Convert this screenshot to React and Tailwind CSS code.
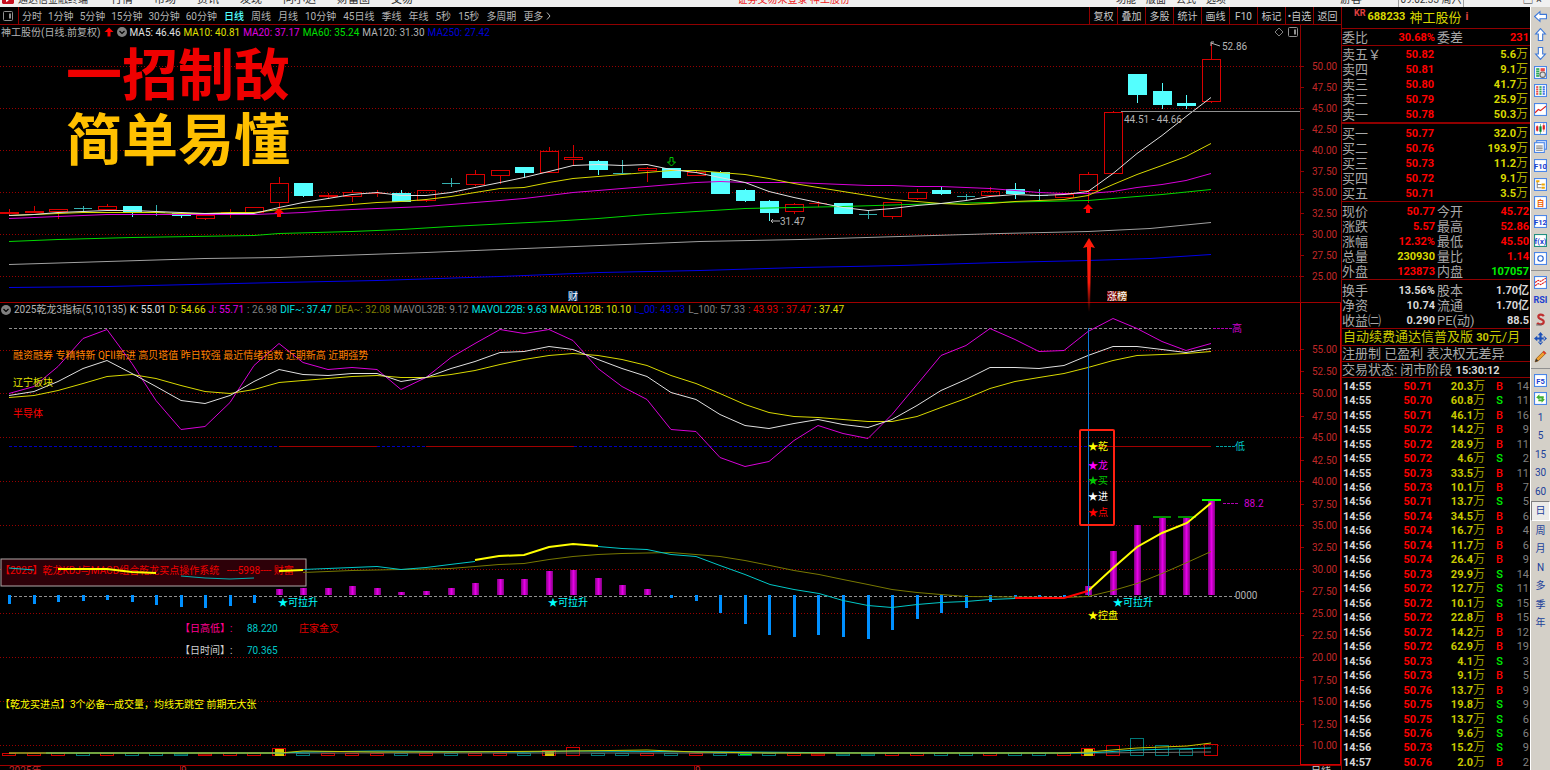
import React from "react";

const STEP = 24.53;
const xAt = (i) => Math.round(9 + i * STEP);

// kind, high, low, body top, body bottom
const candles = [
  ["r", 209, 215, 212, 214], ["r", 206, 213, 211, 213], ["r", 209, 219, 209, 212],
  ["x", 206, 211, 208, 208], ["r", 204, 210, 206, 210], ["c", 206, 217, 206, 212],
  ["x", 205, 216, 212, 212], ["c", 212, 218, 213, 216], ["r", 215, 220, 215, 219],
  ["y", 209, 218, 212, 212], ["r", 207, 213, 207, 213], ["r", 177, 207, 183, 203],
  ["c", 183, 197, 183, 196], ["r", 193, 199, 195, 197], ["r", 190, 202, 192, 197],
  ["y", 190, 197, 193, 193], ["c", 190, 202, 193, 202], ["r", 190, 202, 190, 201],
  ["x", 178, 187, 183, 183], ["r", 170, 186, 174, 185], ["r", 170, 184, 170, 176],
  ["c", 167, 178, 167, 173], ["r", 147, 173, 151, 173], ["r", 145, 165, 157, 160],
  ["c", 160, 175, 161, 170], ["x", 160, 174, 173, 173], ["r", 167, 182, 168, 171],
  ["c", 168, 178, 168, 178], ["r", 170, 176, 172, 176], ["c", 171, 194, 172, 194],
  ["c", 189, 202, 190, 201], ["c", 200, 221, 201, 213], ["r", 203, 214, 204, 212],
  ["y", 201, 207, 203, 203], ["c", 203, 214, 203, 214], ["x", 210, 219, 214, 214],
  ["r", 202, 219, 202, 217], ["r", 189, 200, 192, 199], ["c", 186, 195, 190, 194],
  ["x", 194, 200, 196, 196], ["r", 187, 196, 191, 196], ["c", 183, 199, 189, 194],
  ["x", 189, 200, 195, 195], ["r", 194, 198, 194, 198], ["r", 172, 203, 174, 191],
  ["r", 111, 174, 112, 174], ["c", 74, 103, 74, 95], ["c", 83, 109, 91, 105],
  ["c", 95, 109, 103, 106], ["r", 43, 103, 59, 102],
];

const ma5 = [
  215, 214, 212, 211, 210, 210, 211, 212, 213, 213, 213, 207, 202, 198, 194, 192, 195,
  195, 192, 187, 182, 177, 171, 165, 164, 165, 164, 169, 172, 177, 182, 191, 197, 202,
  207, 210, 208, 205, 203, 200, 196, 194, 195, 194, 191, 173, 153, 135, 116, 97,
];
const ma10 = [
  215, 214, 213, 212, 212, 212, 212, 213, 213, 212, 212, 209, 207, 206, 204, 202, 201,
  199, 196, 192, 188, 187, 182, 178, 176, 174, 172, 170, 170, 172, 174, 178, 183, 187,
  191, 195, 199, 201, 203, 204, 203, 201, 200, 199, 195, 184, 174, 165, 156, 143,
];
const ma20 = [
  218, 217, 216, 215, 214, 214, 214, 214, 214, 214, 214, 213, 212, 210, 209, 208, 207,
  206, 204, 202, 200, 198, 195, 192, 190, 188, 186, 184, 182, 181, 182, 182, 182, 183,
  184, 185, 185, 186, 186, 187, 188, 190, 192, 193, 193, 191, 187, 184, 180, 173,
];
const ma60 = [[9, 241], [58, 239], [132, 237], [254, 235], [279, 233], [352, 231], [401, 229], [450, 226], [549, 221], [598, 218], [647, 214], [696, 211], [745, 208], [843, 206], [941, 203], [1088, 200], [1137, 196], [1162, 194], [1211, 189]];
const ma120 = [[9, 264], [107, 261], [205, 258], [279, 257], [426, 252], [500, 249], [600, 245], [700, 241], [800, 239], [900, 236], [1000, 233], [1088, 231], [1150, 228], [1211, 222]];
const ma250 = [[9, 287], [107, 286], [279, 282], [377, 280], [500, 276], [600, 272], [700, 270], [800, 267], [900, 265], [1000, 262], [1088, 260], [1150, 258], [1211, 254]];

const kLine = [
  395, 391, 381, 368, 360, 373, 386, 400, 403, 395, 381, 369, 374, 375, 373, 373, 381,
  377, 368, 361, 352, 351, 346, 349, 359, 368, 376, 392, 399, 414, 425, 428, 423, 419,
  424, 427, 419, 405, 390, 379, 367, 367, 368, 365, 355, 346, 346, 349, 352, 348,
];
const dLine = [
  397, 395, 390, 383, 376, 374, 378, 385, 391, 393, 389, 382, 380, 378, 376, 375, 377,
  377, 374, 370, 364, 359, 355, 353, 355, 359, 365, 375, 383, 393, 404, 412, 416, 417,
  419, 421, 421, 416, 407, 398, 388, 381, 377, 373, 367, 360, 355, 354, 353, 351,
];
const jLine = [
  393, 386, 366, 338, 329, 363, 400, 429, 426, 402, 365, 343, 362, 369, 367, 369, 389,
  377, 357, 343, 329, 333, 329, 340, 368, 386, 399, 429, 431, 457, 466, 461, 440, 425,
  433, 438, 414, 384, 355, 345, 328, 339, 351, 350, 331, 318, 328, 341, 350, 343,
];

// bar end on the y axis, the zero line is at 595
const macd = [
  604, 604, 602, 601, 600, 602, 605, 607, 608, 606, 603, 589, 588, 588, 586, 588, 592,
  591, 588, 583, 579, 579, 571, 570, 578, 585, 589, 598, 601, 613, 624, 635, 637, 635,
  637, 639, 630, 619, 613, 608, 602, 599, 598, 597, 586, 551, 525, 517, 517, 501,
];

const difLeft = [[303, 569], [328, 568], [352, 567], [377, 566], [401, 569], [426, 567], [450, 564], [475, 561]];
const difRight = [[598, 546], [622, 548], [647, 549], [671, 554], [696, 556], [720, 565], [745, 574], [770, 584], [794, 589], [819, 593], [843, 600], [868, 605], [892, 607], [917, 604], [941, 602], [966, 601], [990, 599], [1015, 598]];
const dea = [[303, 572], [352, 570], [401, 569], [450, 568], [475, 566], [499, 564], [524, 563], [549, 559], [573, 556], [598, 554], [622, 553], [671, 552], [720, 556], [745, 560], [770, 565], [794, 570], [819, 574], [843, 579], [868, 584], [892, 589], [917, 592], [941, 594], [966, 596], [1064, 597], [1088, 596], [1113, 590], [1137, 583], [1162, 573], [1187, 562], [1211, 551]];

// volume boxes: kind and top
const volume = [
  "r", "r", "r", "c", "r", "c", "c", "C", "R", "r", "r", "Y", "c", "r", "r", "r", "c",
  "r", "c", "r", "r", "c", "Y", "r", "c", "c", "r", "c", "r", "c", "g", "c", "r", "R",
  "C", "C", "r", "r", "c", "c", "r", "c", "c", "r", "Y", "r", "c", "c", "c", "r",
];
const volumeTop = { 11: 748, 22: 750, 23: 747, 44: 748, 45: 745, 46: 738, 47: 745, 48: 749, 49: 744 };

const byIndex = (ys) => ys.map((y, i) => `${xAt(i)},${y + 0.5}`).join(" ");
const byPoint = (pts) => pts.map(([x, y]) => `${x},${y + 0.5}`).join(" ");

const Line = ({ points, stroke, width = 1 }) => (
  <polyline points={points} fill="none" stroke={stroke} strokeWidth={width} />
);

const GridLines = ({ ys }) =>
  ys.map((y) => (
    <line key={y} x1="0" x2="100%" y1={y} y2={y} stroke="#980000" strokeDasharray="1 2" shapeRendering="crispEdges" />
  ));

const Candle = ({ index, data }) => {
  const [kind, high, low, top, bottom] = data;
  const x = xAt(index);
  const color = kind === "c" || kind === "x" ? "#54ffff" : "#d80000";
  if (kind === "x" || kind === "y") {
    return (
      <g fill={kind === "x" ? "#35b0b0" : "#c00000"}>
        <rect x={x} y={high} width="1" height={low - high} />
        <rect x={x - 9} y={top} width="18" height="1" />
      </g>
    );
  }
  return (
    <g>
      <rect x={x} y={high} width="1" height={Math.max(top - high, 0)} fill={color} />
      <rect x={x} y={bottom} width="1" height={Math.max(low - bottom, 0)} fill={color} />
      {kind === "c" ? (
        <rect x={x - 9} y={top} width="19" height={bottom - top} fill={color} />
      ) : (
        <rect x={x - 8.5} y={top + 0.5} width="18" height={bottom - top - 1} fill="none" stroke={color} />
      )}
    </g>
  );
};

const PriceChart = () => (
  <svg className="block h-full w-full overflow-visible text-[10px]">
    <defs>
      <linearGradient id="arrowFade" x1="0" y1="0" x2="0" y2="1">
        <stop offset="0.6" stopColor="#ff1a0a" />
        <stop offset="1" stopColor="#ff1a0a" stopOpacity="0" />
      </linearGradient>
    </defs>
    <g transform="translate(0,-39)">
      <GridLines ys={[66, 108, 150, 192, 234, 276]} />
      <g shapeRendering="crispEdges">
        {candles.map((c, i) => (
          <Candle key={i} index={i} data={c} />
        ))}
      </g>
      <Line points={byPoint(ma250)} stroke="#0000e8" />
      <Line points={byPoint(ma120)} stroke="#a0a0a0" />
      <Line points={byPoint(ma60)} stroke="#00d800" />
      <Line points={byIndex(ma20)} stroke="#d800d8" />
      <Line points={byIndex(ma10)} stroke="#d8d800" />
      <Line points={byIndex(ma5)} stroke="#e0e0e0" />

      <line x1="1121" x2="100%" y1="111" y2="111" stroke="#909090" shapeRendering="crispEdges" />
      <text x="1124" y="123" fill="#b4b4b4">44.51 - 44.66</text>
      <path d="M1220 46 L1211 43 M1211 46 V42 H1214" fill="none" stroke="#b4b4b4" />
      <text x="1222" y="50" fill="#b4b4b4">52.86</text>
      <path d="M780 221 H771 M773 219 L771 221 L773 223" fill="none" stroke="#b4b4b4" />
      <text x="780" y="225" fill="#b4b4b4">31.47</text>

      <path d="M671.500 166 L667.500 162 H670 V157.500 H673 V162 H675.500 Z" fill="none" stroke="#00c800" />
      <path d="M279 208 L284 213 H281 V217 H277 V213 H274 Z" fill="#ff0000" />
      <path d="M1088 204 L1093 209 H1090 V213 H1086 V209 H1083 Z" fill="#ff0000" />
      <path d="M1089 238 L1095 248 L1091 247 L1090 312 H1088 L1087 247 L1083 248 Z" fill="url(#arrowFade)" />

      <rect x="568" y="291" width="10" height="10" fill="#003468" />
      <text x="568" y="300" fill="#fff">财</text>
      <rect x="1107" y="291" width="10" height="10" fill="#780000" />
      <rect x="1117" y="291" width="10" height="10" fill="#7a4010" />
      <text x="1107" y="300" fill="#fff">涨榜</text>
    </g>
  </svg>
);

const dashSegments = [
  ["#0000c0", 9, 279], ["#a00000", 279, 377], ["#0000c0", 377, 426],
  ["#a00000", 426, 574], ["#0000c0", 574, 1088], ["#a00000", 1088, 1211],
];

const signals = [
  [1088, 450, "#ffff00", "★乾"],
  [1088, 469, "#ff00ff", "★龙"],
  [1088, 484, "#00c800", "★买"],
  [1088, 500, "#ffffff", "★进"],
  [1088, 516, "#ff0000", "★点"],
  [278, 606, "#00ffff", "★可拉升"],
  [548, 606, "#00ffff", "★可拉升"],
  [1113, 606, "#00ffff", "★可拉升"],
  [1088, 619, "#ffff00", "★控盘"],
  [13, 359, "#ff8000", "融资融券 专精特新 QFII新进 高贝塔值 昨日较强 最近情绪指数 近期新高 近期强势"],
  [13, 386, "#e0e000", "辽宁板块"],
  [13, 417, "#ff0000", "半导体"],
  [180, 632, "#ff0090", "【日高低】:"],
  [247, 632, "#00c8c8", "88.220"],
  [299, 632, "#e00000", "庄家金叉"],
  [180, 654, "#d0d0d0", "【日时间】:"],
  [247, 654, "#00c8c8", "70.365"],
  [0, 708, "#ffff00", "【乾龙买进点】3个必备---成交量，均线无跳空 前期无大张"],
];

const volumeColor = { r: "#d00000", R: "#d00000", c: "#007878", C: "#007878", Y: "#d00000", g: "#007878" };

const VolumeBox = ({ index, kind }) => {
  const x = xAt(index);
  const top = volumeTop[index] || 753;
  const color = volumeColor[kind];
  const solid = kind === "R" || kind === "C";
  return (
    <g>
      <rect x={x - 6.5} y={top + 0.5} width="13" height={755 - top} fill={solid ? color : "#000"} fillOpacity="0.6" stroke={color} />
      {kind === "Y" && <rect x={x - 4} y={top + 1} width="9" height={755 - top} fill="#d8c800" />}
      {kind === "g" && <rect x={x - 5} y="754" width="11" height="1" fill="#00ff00" />}
    </g>
  );
};

const IndicatorChart = () => (
  <svg className="block h-full w-full text-[10px]">
    <defs>
      <linearGradient id="magentaBar">
        <stop offset="0" stopColor="#800080" />
        <stop offset="0.5" stopColor="#e800e8" />
        <stop offset="1" stopColor="#800080" />
      </linearGradient>
    </defs>
    <g transform="translate(0,-316)">
      <GridLines ys={[350, 393, 437, 481, 525, 569, 613, 657, 701, 745]} />
      <g shapeRendering="crispEdges">
        <line x1="9" x2="1211" y1="328" y2="328" stroke="#909090" strokeDasharray="3 2" />
        <line x1="9" x2="1236" y1="596" y2="596" stroke="#909090" strokeDasharray="3 2" />
        {dashSegments.map(([color, x1, x2]) => (
          <line key={x1} x1={x1} x2={x2} y1="446" y2="446" stroke={color} strokeDasharray={color === "#a00000" ? "none" : "3 2"} />
        ))}
        <line x1="1213" x2="1232" y1="328" y2="328" stroke="#b000b0" strokeDasharray="3 1" />
        <line x1="1216" x2="1235" y1="446" y2="446" stroke="#00a0a0" strokeDasharray="3 1" />
        <line x1="1223" x2="1239" y1="503" y2="503" stroke="#b000b0" strokeDasharray="3 1" />
      </g>
      <text x="1232" y="332" fill="#d000d0">高</text>
      <text x="1235" y="450" fill="#00c8c8">低</text>
      <text x="1244" y="507" fill="#d000d0">88.2</text>
      <text x="1235" y="599" fill="#b4b4b4">0000</text>

      <Line points={byIndex(jLine)} stroke="#d800d8" />
      <Line points={byIndex(dLine)} stroke="#d8d800" />
      <Line points={byIndex(kLine)} stroke="#e0e0e0" />

      <g shapeRendering="crispEdges">
        {macd.map((y, i) =>
          y < 595 ? (
            <rect key={i} x={xAt(i) - 3} y={y} width="7" height={595 - y} fill="url(#magentaBar)" />
          ) : (
            <rect key={i} x={xAt(i) - 1} y="595" width="3" height={y - 595} fill="#0090ff" />
          )
        )}
        <rect x="1153" y="516" width="18" height="2" fill="#009000" />
        <rect x="1178" y="516" width="18" height="2" fill="#009000" />
        <rect x="1202" y="499" width="19" height="2" fill="#00ff00" />
      </g>

      <rect x="1" y="559" width="305" height="27" fill="#2d0008" stroke="#b0a8a8" />
      <text x="0" y="574" fill="#f00000" className="whitespace-pre">
        {"【2025】乾龙KDJ与MACD组合乾龙买点操作系统   ----5998---- 财富"}
      </text>
      <Line points="9,568 34,570" stroke="#00c8c8" />
      <Line points="58,569 107,569 132,572 156,573" stroke="#ffff00" width={2} />
      <Line points="181,576 205,578 230,579 254,578" stroke="#00b0b0" />
      <Line points="279,571 303,570" stroke="#ffff00" width={2} />
      <Line points={byPoint(dea)} stroke="#787800" />
      <Line points={byPoint(difLeft)} stroke="#00c8c8" />
      <Line points={byPoint(difRight)} stroke="#00c8c8" />
      <Line points="475,560 499,556 524,555 549,547 573,544 598,546" stroke="#ffff00" width={2} />
      <Line points="1015,598 1064,598 1088,591" stroke="#ff0000" width={2} />
      <Line points="1088,591 1113,568 1137,547 1162,533 1187,523 1211,503" stroke="#ffff00" width={2} />

      <rect x="1088" y="328" width="1" height="268" fill="#0a78d8" />
      <rect x="1080" y="430" width="34" height="95" rx="1" fill="none" stroke="#ff2010" strokeWidth="2" />
      {signals.map(([x, y, color, text]) => (
        <text key={`${x}-${y}`} x={x} y={y} fill={color}>
          {text}
        </text>
      ))}

      <g shapeRendering="crispEdges">
        {volume.map((kind, i) => (
          <VolumeBox key={i} index={i} kind={kind} />
        ))}
      </g>
      <Line points="9,753 1088,753 1211,752" stroke="#707070" />
      <Line points="46,753 279,753 303,752 377,751 523,752 573,751 745,752 868,753 1088,753 1137,750 1211,748" stroke="#00c8c8" />
      <Line points="9,753 279,753 303,751 377,752 450,752 573,751 647,750 696,752 770,753 1064,753 1088,752 1137,748 1187,746 1211,743" stroke="#c8c800" />
    </g>
  </svg>
);

const priceTicks = [
  [66, "50.00"], [87, "47.50"], [108, "45.00"], [129, "42.50"], [150, "40.00"],
  [171, "37.50"], [192, "35.00"], [213, "32.50"], [234, "30.00"], [255, "27.50"], [276, "25.00"],
];
const indicatorTicks = [
  [349, "55.00"], [371, "52.50"], [393, "50.00"], [416, "47.50"], [437, "45.00"], [460, "42.50"],
  [481, "40.00"], [504, "37.50"], [525, "35.00"], [547, "32.50"], [569, "30.00"], [591, "27.50"],
  [613, "25.00"], [635, "22.50"], [657, "20.00"], [680, "17.50"], [701, "15.00"], [724, "12.50"], [745, "10.00"],
];

const Axis = ({ ticks, origin }) => (
  <svg className="block h-full w-full text-[10px]">
    {ticks.map(([y, label]) => (
      <g key={label}>
        <rect x="0" y={y - origin} width="3" height="1" fill="#900000" />
        <text x="11" y={y - origin + 4} fill="#c02828">
          {label}
        </text>
      </g>
    ))}
  </svg>
);

const periods = [
  "分时", "1分钟", "5分钟", "15分钟", "30分钟", "60分钟", "日线", "周线", "月线",
  "10分钟", "45日线", "季线", "年线", "5秒", "15秒", "多周期", "更多",
];
const tools = ["复权", "叠加", "多股", "统计", "画线", "F10", "标记", "•自选", "返回"];

const maLabels = [
  ["MA5: 46.46", "text-[#e0e0e0]"],
  ["MA10: 40.81", "text-[#e0e000]"],
  ["MA20: 37.17", "text-[#e000e0]"],
  ["MA60: 35.24", "text-[#00e000]"],
  ["MA120: 31.30", "text-[#b4b4b4]"],
  ["MA250: 27.42", "text-[#0000d8]"],
];
const indicatorLabels = [
  ["2025乾龙3指标(5,10,135)", "text-[#b4b4b4]"],
  ["K: 55.01", "text-[#e0e0e0]"],
  ["D: 54.66", "text-[#e0e000]"],
  ["J: 55.71", "text-[#e000e0]"],
  [": 26.98", "text-[#808080]"],
  ["DIF~: 37.47", "text-[#00e0e0]"],
  ["DEA~: 32.08", "text-[#808000]"],
  ["MAVOL32B: 9.12", "text-[#808080]"],
  ["MAVOL22B: 9.63", "text-[#00e0e0]"],
  ["MAVOL12B: 10.10", "text-[#e0e000]"],
  ["L_00: 43.93", "text-[#0000d8]"],
  ["L_100: 57.33", "text-[#808080]"],
  [": 43.93", "text-[#e00000]"],
  [": 37.47", "text-[#e00000]"],
  [": 37.47", "text-[#e0e000]"],
];

const asks = [
  ["卖五￥", "50.82", "5.6"], ["卖四", "50.81", "9.1"], ["卖三", "50.80", "41.7"],
  ["卖二", "50.79", "25.9"], ["卖一", "50.78", "50.3"],
];
const bids = [
  ["买一", "50.77", "32.0"], ["买二", "50.76", "193.9"], ["买三", "50.73", "11.2"],
  ["买四", "50.72", "9.1"], ["买五", "50.71", "3.5"],
];

const red = "text-[#ff0000]";
const white = "text-[#d8d8d8]";
const details = [
  ["现价", "50.77", red, "今开", "45.72", red],
  ["涨跌", "5.57", red, "最高", "52.86", red],
  ["涨幅", "12.32%", red, "最低", "45.50", red],
  ["总量", "230930", "text-[#d8d800]", "量比", "1.14", red],
  ["外盘", "123873", red, "内盘", "107057", "text-[#00f000]"],
];
const finance = [
  ["换手", "13.56%", white, "股本", "1.70亿", white],
  ["净资", "10.74", white, "流通", "1.70亿", white],
  ["收益㈡", "0.290", white, "PE(动)", "88.5", white],
];

const trades = [
  ["14:55", "50.71", "20.3", "B", 14], ["14:55", "50.70", "60.8", "S", 11], ["14:55", "50.71", "46.1", "B", 16],
  ["14:55", "50.72", "14.2", "B", 9], ["14:55", "50.72", "28.9", "B", 11], ["14:55", "50.72", "4.6", "S", 2],
  ["14:55", "50.73", "33.5", "B", 11], ["14:56", "50.73", "10.1", "B", 7], ["14:56", "50.71", "13.7", "S", 5],
  ["14:56", "50.74", "34.5", "B", 6], ["14:56", "50.74", "16.7", "B", 4], ["14:56", "50.74", "11.7", "B", 6],
  ["14:56", "50.74", "26.4", "B", 9], ["14:56", "50.73", "29.9", "S", 14], ["14:56", "50.72", "12.7", "S", 11],
  ["14:56", "50.72", "10.1", "S", 15], ["14:56", "50.72", "22.8", "B", 15], ["14:56", "50.72", "14.2", "B", 12],
  ["14:56", "50.72", "62.9", "B", 19], ["14:56", "50.73", "4.1", "S", 3], ["14:56", "50.73", "9.1", "B", 5],
  ["14:56", "50.76", "13.7", "B", 9], ["14:56", "50.75", "19.8", "S", 9], ["14:56", "50.75", "13.7", "S", 6],
  ["14:56", "50.76", "9.6", "S", 6], ["14:56", "50.73", "15.2", "S", 9], ["14:57", "50.76", "2.0", "B", 2],
];

const Book = ({ rows }) => (
  <table className="w-full table-fixed border-b border-[#900000]">
    <tbody>
      {rows.map(([label, price, amount]) => (
        <tr key={label} className="h-[15px] leading-[15px]">
          <td className="w-[46px] p-0 whitespace-nowrap text-[13px] text-[#a8a8a8]">{label}</td>
          <td className="w-[46px] p-0 text-right font-bold text-[#ff0000]">{price}</td>
          <td className="p-0 pr-0.5 text-right font-bold text-[#d8d800]">
            {amount}
            <span className="text-[12px] font-normal text-[#b0b000]">万</span>
          </td>
        </tr>
      ))}
    </tbody>
  </table>
);

const Pairs = ({ rows }) => (
  <table className="w-full table-fixed border-b border-[#900000]">
    <tbody>
      {rows.map(([a, av, ac, b, bv, bc]) => (
        <tr key={a} className="h-[15px] leading-[15px]">
          <td className="w-[46px] p-0 whitespace-nowrap text-[13px] text-[#a8a8a8]">{a}</td>
          <td className={`w-[47px] p-0 text-right font-bold ${ac}`}>{av}</td>
          <td className="w-[44px] p-0 pl-0.5 whitespace-nowrap text-[13px] text-[#a8a8a8]">{b}</td>
          <td className={`p-0 pr-px text-right font-bold ${bc}`}>{bv}</td>
        </tr>
      ))}
    </tbody>
  </table>
);

const QuotePanel = () => (
  <aside className="flex w-[189px] shrink-0 flex-col overflow-hidden border-l border-[#900000] text-[11px]">
    <h1 className="flex h-[22px] shrink-0 items-center border-b border-[#900000] pl-3 text-[#d8d800]">
      <span className="mr-0.5 mb-2 text-[9px] font-bold text-[#e04040]">KR</span>
      <span className="text-[11px] font-bold">688233</span>
      <span className="ml-1 text-[13px]">神工股份</span>
      <span className="ml-1 font-bold text-[#e04040]">i</span>
    </h1>
    <div className="h-[17px] shrink-0 pt-px">
      <Pairs rows={[["委比", "30.68%", red, "委差", "231", red]]} />
    </div>
    <div className="flex h-[78px] shrink-0 flex-col justify-end border-b border-[#900000]">
      <Book rows={asks} />
    </div>
    <div className="flex h-[78px] shrink-0 flex-col justify-end">
      <Book rows={bids} />
    </div>
    <div className="flex h-[78px] shrink-0 flex-col justify-end">
      <Pairs rows={details} />
    </div>
    <div className="flex h-[49px] shrink-0 flex-col justify-end">
      <Pairs rows={finance} />
    </div>
    <a href="#renew" className="h-[17px] shrink-0 border-b border-[#900000] pl-px text-[13px] leading-[16px] whitespace-nowrap text-[#c8c800]">
      自动续费通达信普及版 <b className="text-[11px]">30</b>元/月
    </a>
    <p className="h-[16px] shrink-0 border-b border-[#900000] text-[13px] leading-[15px] whitespace-nowrap text-[#a8a8a8]">
      注册制 已盈利 表决权无差异
    </p>
    <p className="h-[16px] shrink-0 border-b border-[#900000] text-[13px] leading-[15px] whitespace-nowrap text-[#a8a8a8]">
      交易状态: 闭市阶段 <b className="text-[11px] text-[#d8d8d8]">15:30:12</b>
    </p>
    <div className="min-h-0 flex-1 pt-px">
      <table className="h-full w-full table-fixed">
        <tbody>
          {trades.map(([time, price, amount, side, count], i) => (
            <tr key={i} className="leading-[13px]">
              <td className="w-[42px] p-0 pl-px font-bold text-[#d8d8d8]">{time}</td>
              <td className="w-[48px] p-0 text-right font-bold text-[#ff0000]">{price}</td>
              <td className="w-[53px] p-0 text-right font-bold text-[#c8c800]">
                {amount}
                <span className="text-[12px] font-normal text-[#a0a000]">万</span>
              </td>
              <td className={`w-[22px] p-0 pr-1 text-right font-medium ${side === "B" ? "text-[#ff0000]" : "text-[#00f000]"}`}>{side}</td>
              <td className="p-0 pr-px text-right text-[#808080]">{count}</td>
            </tr>
          ))}
        </tbody>
      </table>
    </div>
  </aside>
);

const Frame = ({ children, stroke = "#4a86e8" }) => (
  <svg viewBox="0 0 12 12" className="size-[13px]">
    <rect x="0.5" y="0.5" width="11" height="11" fill="#fff" stroke={stroke} />
    {children}
  </svg>
);
const Arrow = ({ d }) => (
  <svg viewBox="0 0 12 12" className="size-[13px]">
    <path d={d} fill="#fff" stroke="#3c78d8" />
  </svg>
);
const FrameText = ({ text, fill = "#2040d0", stroke }) => (
  <Frame stroke={stroke}>
    <text x="6" y="9" textAnchor="middle" fontSize="7" fontWeight="bold" fill={fill}>{text}</text>
  </Frame>
);

const railMain = [
  ["后退", <Arrow d="M0.500 6 L5.500 1.500 V4 H11.500 V8 H5.500 V10.500 Z" />],
  ["上移", <Arrow d="M6 0.500 L10.500 5.500 H8 V11.500 H4 V5.500 H1.500 Z" />],
  ["下移", <Arrow d="M6 11.500 L10.500 6.500 H8 V0.500 H4 V6.500 H1.500 Z" />],
  ["报表", <Frame><path d="M2 2H5V10H2Z" fill="#30a858" /><path d="M2 4H5M2 6H5M2 8H5" stroke="#fff" strokeWidth="0.500" /><path d="M6 2H10V5H6Z" fill="#e84848" /><circle cx="8" cy="8" r="2.500" fill="#ddd" stroke="#666" /></Frame>],
  ["多栏", <Frame><path d="M2 2H4V10H2Z" fill="#e84848" /><path d="M5 2H7V10H5Z" fill="#30a858" /><path d="M8 2H10V10H8Z" fill="#4070e8" /><path d="M1 4H11M1 6H11M1 8H11" stroke="#fff" strokeWidth="0.500" /></Frame>],
  ["分时图", <Frame><path d="M1 9 L4 6 L6 7 L11 3" fill="none" stroke="#e02020" /></Frame>],
  ["K线图", <Frame><path d="M3 4V8M9 3V7" stroke="#e02020" strokeWidth="2" /><path d="M3 3V9M9 1V9" stroke="#e02020" strokeWidth="0.500" /><path d="M6 4V9" stroke="#008030" strokeWidth="2" /><path d="M6 2V11" stroke="#008030" strokeWidth="0.500" /></Frame>],
  ["窗口", <svg viewBox="0 0 12 12" className="size-[13px]"><rect x="2.500" y="0.500" width="9" height="8" fill="#cfe0ff" stroke="#4a86e8" /><rect x="0.500" y="2.500" width="9" height="9" fill="#fff" stroke="#4a86e8" /><path d="M2 5.500H8M2 7.500H8M2 9.500H8" stroke="#777" /></svg>],
  ["F10", <FrameText text="F10" />],
  ["树形", <Frame><path d="M3 3V9H7M3 6H7" fill="none" stroke="#888" /><path d="M2 2H5V4H2ZM7 5H10V7H7ZM7 8H10V10H7Z" fill="#f0a800" /></Frame>],
  ["自选", <FrameText text="自" fill="#f06000" />],
  ["F12", <FrameText text="F12" />],
  ["公式", <FrameText text="f(x)" stroke="#209080" />],
  ["圆", <Frame><circle cx="6" cy="6" r="2.500" fill="none" stroke="#2060d0" /></Frame>],
];
const railDraw = [
  ["波形", <Frame><path d="M1 6 L4 4 L6 5 L11 2M1 9 L4 7 L6 8 L11 5" fill="none" stroke="#e02020" strokeDasharray="2 0.500" /></Frame>],
  ["RSI", <span className="text-[9px] font-bold text-[#2040d0]">RSI</span>],
  ["美元", <svg viewBox="0 0 12 12" className="size-[13px]"><path d="M9 3 C8 1 4 1 4 3.500 C4 6 9 5.500 9 8 C9 11 4 11 3 9" fill="none" stroke="#c03030" strokeWidth="2" /><path d="M2 11H7" stroke="#666" /></svg>],
  ["移动", <svg viewBox="0 0 12 12" className="size-[13px]"><path d="M6 0 L8.500 3 H3.500 Z M6 12 L8.500 9 H3.500 Z M0 6 L3 3.500 V8.500 Z M12 6 L9 3.500 V8.500 Z M5 2H7V10H5Z M2 5H10V7H2Z" fill="#1c50b8" /></svg>],
  ["画笔", <svg viewBox="0 0 12 12" className="size-[13px]"><path d="M1 11 L2 8 L9 1 L11 3 L4 10 Z" fill="#f0a030" stroke="#905010" strokeWidth="0.700" /><path d="M1 11 L2 8 L4 10 Z" fill="#333" /><path d="M8 2 L9 1 L11 3 L10 4 Z" fill="#e03030" /></svg>],
];
const railPeriods = [
  ["F5", <FrameText text="F5" />],
  ["刷新", <Frame><path d="M2 5 L5 2 V4 H9 V6 H5 V7 Z M10 7 L7 10 V8.500 H4 V7 H7 V5.500 Z" fill="#40b030" /></Frame>],
  ...["1", "5", "15", "30", "60", "日", "周", "月", "N", "多", "季", "年"].map((t) => [t, t]),
];

const RailGroup = ({ items, className }) => (
  <div className={`flex shrink-0 flex-col ${className}`}>
    {items.map(([name, content]) => (
      <button
        key={name}
        type="button"
        aria-label={name}
        className={`flex min-h-0 w-full flex-1 items-center justify-center text-[10px] text-[#20409a] ${name === "日" ? "border border-t-[#808080] border-l-[#808080] border-r-white border-b-white bg-[#ecebe8]" : ""}`}
      >
        {content}
      </button>
    ))}
  </div>
);

const ToggleIcon = () => (
  <svg viewBox="0 0 10 10" className="size-2.5">
    <rect x="0.5" y="0.5" width="9" height="9" rx="1" fill="none" stroke="#909090" />
    <path d="M6 2.500H8V7.500H6Z" fill="#909090" />
  </svg>
);

const CollapseIcon = () => (
  <svg viewBox="0 0 10 10" className="size-2.5 shrink-0">
    <circle cx="5" cy="5" r="5" fill="#808080" />
    <path d="M2.500 4 L5 6.500 L7.500 4" fill="none" stroke="#000" strokeWidth="1.200" />
  </svg>
);

const PeriodButton = ({ label, active, onSelect }) => (
  <button type="button" onClick={() => onSelect(label)} className={active ? "font-medium text-[#54ffff]" : ""}>
    {label}
  </button>
);

const App = () => {
  const [period, setPeriod] = React.useState("日线");

  return (
    <div className="flex h-screen flex-col overflow-hidden bg-black font-[Roboto,'Noto_Sans_CJK_SC',sans-serif] text-[10px]">
      <header className="flex h-[7px] shrink-0 items-end overflow-hidden bg-[#f0f0f0] text-[11px] leading-[14px] whitespace-nowrap text-[#303030]">
        <svg viewBox="0 0 12 6" className="mb-[3px] ml-0.5 h-1.5 w-3 shrink-0">
          <path d="M0 0H12V5L11 6H1L0 5Z" fill="#c81020" />
          <path d="M4 0H8L6 3L4 4Z" fill="#fff" />
        </svg>
        <span className="ml-1 w-[93px] text-[10px]">通达信金融终端</span>
        <nav className="flex gap-[21px]">
          {["行情", "市场", "资讯", "发现", "问小达", "财富圈", "交易"].map((item) => (
            <button key={item} type="button">{item}</button>
          ))}
        </nav>
        <span className="mr-[266px] ml-auto text-[10px] text-[#f02020]">证券交易未登录 神工股份</span>
        <div className="flex gap-2.5">
          {["功能", "版面", "公式", "选项"].map((item) => (
            <button key={item} type="button" className="text-[10px]">{item}</button>
          ))}
        </div>
        <span className="ml-[114px]">游客</span>
        <span className="ml-9 w-[66px] border-x border-[#a0a0a0] text-center text-[10px]">09:02:33 周六</span>
        <span className="mr-2 ml-3 w-[66px] text-right">— □ ×</span>
      </header>

      <div className="flex min-h-0 flex-1">
        <main className="flex min-w-0 flex-1 flex-col">
          <div className="flex h-[18px] shrink-0 items-stretch border-b border-[#900000] whitespace-nowrap text-[#b4b4b4]">
            <button type="button" aria-label="侧栏" className="flex w-[19px] items-center justify-center border-r border-[#900000] pr-0.5">
              <ToggleIcon />
            </button>
            <div className="flex items-center gap-1.5 pt-px pl-[3px]">
              {periods.slice(0, 6).map((item) => (
                <PeriodButton key={item} label={item} active={item === period} onSelect={setPeriod} />
              ))}
            </div>
            <div className="flex flex-1 items-center gap-[7px] pt-px pl-[7px]">
              {periods.slice(6).map((item) => (
                <PeriodButton key={item} label={item} active={item === period} onSelect={setPeriod} />
              ))}
              <svg viewBox="0 0 5 8" className="-ml-1 h-2 w-[5px]">
                <path d="M1 0.500 L4 4 L1 7.500" fill="none" stroke="#b4b4b4" />
              </svg>
            </div>
            <div className="flex">
              {tools.map((item) => (
                <button key={item} type="button" className="w-7 border-l border-[#900000] pt-px text-[#c8c8c8]">
                  {item}
                </button>
              ))}
            </div>
          </div>

          <section className="flex h-[277px] shrink-0">
            <div className="relative flex min-w-0 flex-1 flex-col">
              <div className="flex h-[14px] shrink-0 items-center gap-[3px] pl-px whitespace-nowrap">
                <span className="text-[#b4b4b4]">神工股份(日线.前复权)</span>
                <svg viewBox="0 0 10 10" className="size-2.5">
                  <path d="M5 0.500 L9.500 5 H6.500 V9.500 H3.500 V5 H0.500 Z" fill="#ff0000" />
                </svg>
                <CollapseIcon />
                {maLabels.map(([text, color]) => (
                  <span key={text} className={color}>{text}</span>
                ))}
                <span className="mr-0.5 ml-auto flex items-center gap-1">
                  <svg viewBox="0 0 10 10" className="size-2.5">
                    <path d="M5 1 L9 5 L5 9 L1 5 Z" fill="none" stroke="#808080" />
                  </svg>
                  <ToggleIcon />
                </span>
              </div>
              <div className="min-h-0 flex-1">
                <PriceChart />
              </div>
              <div className="absolute top-[19px] left-[66px] text-[56px] leading-[65px] font-bold whitespace-nowrap">
                <p className="text-[#ee0000]">一招制敌</p>
                <p className="text-[#ffc000]">简单易懂</p>
              </div>
            </div>
            <div className="w-[41px] border-l border-[#900000]">
              <Axis ticks={priceTicks} origin={25} />
            </div>
          </section>

          <section className="flex min-h-0 flex-1 border-t border-[#a00000]">
            <div className="flex min-w-0 flex-1 flex-col">
              <div className="flex h-[13px] shrink-0 items-center gap-[3px] pl-px whitespace-nowrap">
                <CollapseIcon />
                {indicatorLabels.map(([text, color], i) => (
                  <span key={i} className={color}>{text}</span>
                ))}
              </div>
              <div className="min-h-0 flex-1">
                <IndicatorChart />
              </div>
            </div>
            <div className="w-[41px] border border-t-0 border-[#d00000]">
              <Axis ticks={indicatorTicks} origin={303} />
            </div>
          </section>

          <footer className="flex h-[5px] shrink-0 overflow-hidden border-t border-[#a00000] leading-[10px] text-[#c02828]">
            <span className="ml-[9px] w-[171px]">2025年</span>
            <span className="w-[514px] border-l border-[#a00000]">9</span>
            <span className="border-l border-[#a00000]">9</span>
            <span className="mr-2.5 ml-auto text-[#c8c8c8]">日线</span>
          </footer>
        </main>

        <QuotePanel />

        <aside className="w-[20px] shrink-0 overflow-hidden border-l border-white bg-[#d4d0c8]">
          <RailGroup items={railMain} className="h-[261px]" />
          <hr className="my-0.5 border-[#909090]" />
          <RailGroup items={railDraw} className="mt-px h-[93px]" />
          <hr className="my-0.5 border-[#909090]" />
          <RailGroup items={railPeriods} className="mt-px h-[261px]" />
        </aside>
      </div>
    </div>
  );
};

export default App;
